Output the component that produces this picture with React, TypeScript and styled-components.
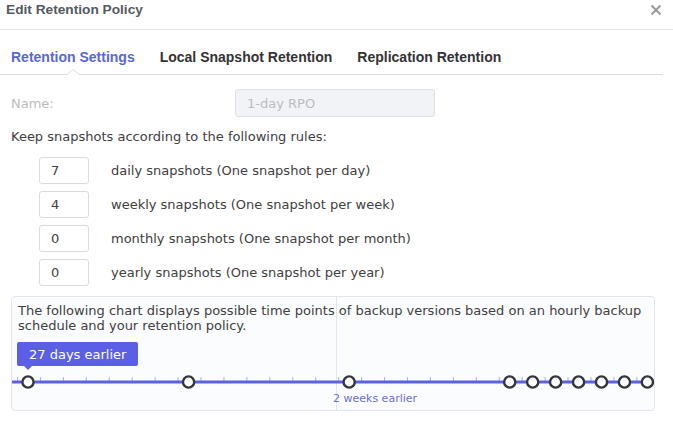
import React from "react";
import styled, { createGlobalStyle } from "styled-components";

const Global = createGlobalStyle`
  html, body { margin: 0; padding: 0; background: #ffffff; }
  body { font-family: "DejaVu Sans", Verdana, sans-serif; color: #404040; }
  * { box-sizing: border-box; }
`;

const Dialog = styled.div`
  width: 673px;
  height: 426px;
  background: #fff;
  display: flex;
  flex-direction: column;
  overflow: hidden;
`;

const Header = styled.div`
  height: 30px;
  flex: none;
  border-bottom: 1px solid #e8e8e8;
  display: flex;
  align-items: flex-start;
  justify-content: space-between;
  padding: 0 11px 0 6px;
`;

const Title = styled.div`
  font-family: "Liberation Sans", Arial, sans-serif;
  font-weight: 700;
  font-size: 13.7px;
  line-height: 20px;
  color: #555a60;
`;

const Close = styled.button`
  border: 0;
  background: none;
  padding: 0;
  margin-top: 4px;
  width: 12px;
  height: 12px;
  display: flex;
  cursor: pointer;
`;

const Body = styled.div`
  padding: 0 10px 0 0;
  display: flex;
  flex-direction: column;
`;

const Tabs = styled.div`
  height: 45px;
  display: flex;
  align-items: center;
  gap: 25px;
  padding: 10px 0 0 11px;
  border-bottom: 1px solid #dedede;
  position: relative;
`;

const Tab = styled.div<{ $active?: boolean }>`
  font-family: "Liberation Sans", Arial, sans-serif;
  font-weight: 700;
  font-size: 14px;
  color: ${(p) => (p.$active ? "#5a67d6" : "#333")};
  position: relative;
  height: 100%;
  display: flex;
  align-items: center;
  ${(p) =>
    p.$active &&
    `
    &::before, &::after {
      content: "";
      position: absolute;
      left: 50%;
      bottom: -1px;
      transform: translateX(-50%);
      border-style: solid;
      border-color: transparent;
    }
    &::before {
      border-width: 0 7px 6px 7px;
      border-bottom-color: #dedede;
    }
    &::after {
      border-width: 0 6px 5px 6px;
      border-bottom-color: #ffffff;
      bottom: -1px;
    }
  `}
`;

const Content = styled.div`
  padding: 14px 0 0 11px;
  display: flex;
  flex-direction: column;
`;

const NameRow = styled.div`
  display: grid;
  grid-template-columns: 224px 200px;
  align-items: center;
  height: 28px;
`;

const NameLabel = styled.label`
  font-size: 13px;
  color: #bcbcbc;
`;

const NameInput = styled.div`
  height: 28px;
  border: 1px solid #dfe1e6;
  border-radius: 3px;
  background: #f2f3f7;
  color: #b9bcc2;
  font-size: 13px;
  display: flex;
  align-items: center;
  padding-left: 11px;
`;

const Lead = styled.div`
  font-size: 13px;
  line-height: 16px;
  margin-top: 12px;
  color: #404040;
`;

const Rules = styled.div`
  display: flex;
  flex-direction: column;
  gap: 7px;
  margin-top: 12px;
  padding-left: 28px;
`;

const Rule = styled.div`
  display: flex;
  align-items: center;
  gap: 22px;
`;

const NumBox = styled.div`
  width: 50px;
  height: 27px;
  border: 1px solid #dcdcdc;
  border-radius: 3px;
  background: #fff;
  font-size: 13px;
  color: #404040;
  display: flex;
  align-items: center;
  padding-left: 11px;
`;

const RuleText = styled.span`
  font-size: 13px;
  color: #404040;
`;

const ChartBox = styled.div`
  margin-top: 10px;
  width: 644px;
  height: 115px;
  border: 1px solid #e2e5ec;
  border-radius: 4px;
  background: #fbfcfe;
  position: relative;
  display: flex;
  flex-direction: column;
  overflow: hidden;
`;

const Divider = styled.div`
  position: absolute;
  left: 324px;
  top: 0;
  bottom: 0;
  width: 1px;
  background: #dfe5f5;
`;

const Description = styled.div`
  position: relative;
  padding: 6px 7px 0 6px;
  font-size: 13px;
  line-height: 15px;
  height: 36px;
  color: #404040;
`;

const Timeline = styled.div`
  position: relative;
  flex: 1;
`;

const Bubble = styled.div`
  position: absolute;
  left: 5px;
  top: 9px;
  height: 24px;
  padding: 0 12px;
  background: #5b5fe6;
  color: #fff;
  border-radius: 2px;
  font-size: 13px;
  display: flex;
  align-items: center;
  &::after {
    content: "";
    position: absolute;
    left: 7px;
    top: 100%;
    border-style: solid;
    border-width: 4px 4px 0 4px;
    border-color: #5b5fe6 transparent transparent transparent;
  }
`;

const Marker = styled.div`
  position: absolute;
  left: 321px;
  top: 59px;
  font-size: 11px;
  color: #6a70c8;
  line-height: 14px;
`;

const STEP = 22.94;
const LINE_Y = 49;
const kept = [0, 7, 14, 21, 22, 23, 24, 25, 26, 27];

function Chart() {
  const ticks = Array.from({ length: 29 }, (_, i) => 5.5 + i * STEP);
  return (
    <svg width="642" height="77" viewBox="0 0 642 77" style={{ display: "block" }}>
      {ticks.map((x, i) => (
        <line key={i} x1={x} x2={x} y1={LINE_Y - 5} y2={LINE_Y} stroke="#a9b1ee" strokeWidth="1" />
      ))}
      <rect x="0" y={LINE_Y - 1.5} width="642" height="3" fill="#5b62e4" />
      {kept.map((k) => (
        <circle key={k} cx={16 + k * STEP} cy={LINE_Y} r="5.6" fill="#fff" stroke="#33363b" strokeWidth="2.4" />
      ))}
    </svg>
  );
}

export default function App() {
  const rules = [
    { v: "7", t: "daily snapshots (One snapshot per day)" },
    { v: "4", t: "weekly snapshots (One snapshot per week)" },
    { v: "0", t: "monthly snapshots (One snapshot per month)" },
    { v: "0", t: "yearly snapshots (One snapshot per year)" },
  ];
  return (
    <>
      <Global />
      <Dialog>
        <Header>
          <Title>Edit Retention Policy</Title>
          <Close aria-label="Close">
            <svg width="12" height="12" viewBox="0 0 12 12">
              <path d="M1.5 1.5 L10.5 10.5 M10.5 1.5 L1.5 10.5" stroke="#9a9a9a" strokeWidth="2" />
            </svg>
          </Close>
        </Header>
        <Body>
          <Tabs>
            <Tab $active>Retention Settings</Tab>
            <Tab>Local Snapshot Retention</Tab>
            <Tab>Replication Retention</Tab>
          </Tabs>
          <Content>
            <NameRow>
              <NameLabel>Name:</NameLabel>
              <NameInput>1-day RPO</NameInput>
            </NameRow>
            <Lead>Keep snapshots according to the following rules:</Lead>
            <Rules>
              {rules.map((r) => (
                <Rule key={r.t}>
                  <NumBox>{r.v}</NumBox>
                  <RuleText>{r.t}</RuleText>
                </Rule>
              ))}
            </Rules>
            <ChartBox>
              <Divider />
              <Description>
                The following chart displays possible time points of backup versions based on an hourly backup
                schedule and your retention policy.
              </Description>
              <Timeline>
                <Chart />
                <Bubble>27 days earlier</Bubble>
                <Marker>2 weeks earlier</Marker>
              </Timeline>
            </ChartBox>
          </Content>
        </Body>
      </Dialog>
    </>
  );
}
